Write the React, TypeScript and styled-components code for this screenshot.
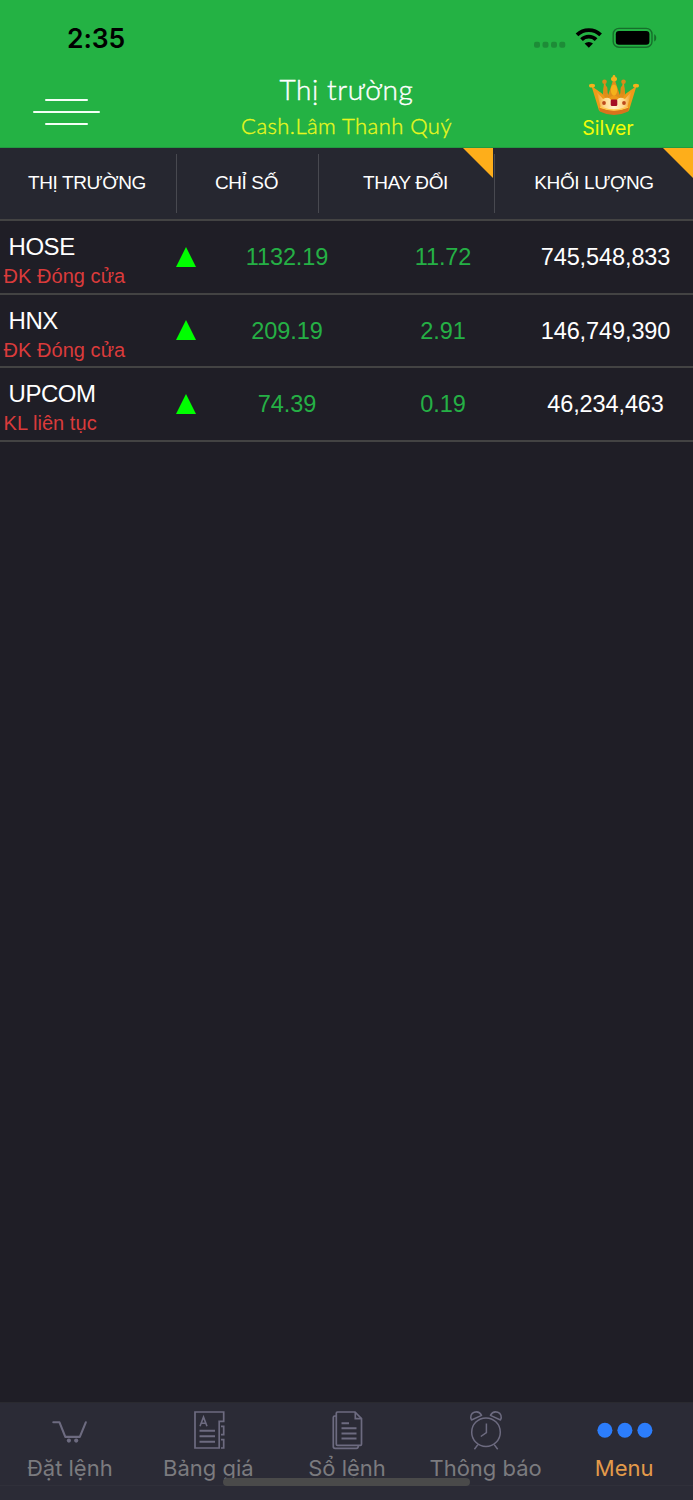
import React from "react";
import styled, { createGlobalStyle } from "styled-components";

const GlobalStyle = createGlobalStyle`
  * { box-sizing: border-box; }
  body { margin: 0; background: #1f1e26; }
`;

const Screen = styled.div`
  width: 693px;
  height: 1500px;
  display: flex;
  flex-direction: column;
  background: #1f1e26;
  color: #fff;
  font-family: "Liberation Sans", Arial, sans-serif;
  white-space: nowrap;
  overflow: hidden;
`;

const Header = styled.header`
  height: 148px;
  background: #24b244;
  border-bottom: 1px solid #229a40;
  flex: none;
`;

const StatusBar = styled.div`
  height: 72px;
  display: flex;
  justify-content: space-between;
  padding: 21px 36px 0 67px;
`;

const Clock = styled.div`
  font: 600 26.5px/34px Inter, sans-serif;
  letter-spacing: -0.1px;
  color: #000;
`;

const StatusIcons = styled.svg`
  display: block;
  width: 124px;
  height: 34px;
`;

const TitleBar = styled.div`
  height: 75px;
  display: grid;
  grid-template-columns: 173px 1fr 173px;
`;

const MenuButton = styled.div`
  display: flex;
  flex-direction: column;
  align-items: center;
  gap: 10px;
  width: 67px;
  margin: 26.5px 0 0 33.4px;
`;

const MenuLine = styled.span<{ $width: number }>`
  width: ${(p) => p.$width}px;
  height: 2px;
  border-radius: 1px;
  background: #f4fff6;
`;

const Titles = styled.div`
  display: flex;
  flex-direction: column;
  align-items: center;
  font-family: Lato, sans-serif;
`;

const Title = styled.h1`
  margin: 0;
  font-size: 28px;
  font-weight: 300;
  line-height: 35px;
  letter-spacing: 0.6px;
  -webkit-text-stroke: 0.4px #fff;
`;

const Account = styled.div`
  font-size: 22px;
  font-weight: 300;
  line-height: 37px;
  letter-spacing: 0.45px;
  color: #e8f81e;
  -webkit-text-stroke: 0.35px #e8f81e;
`;

const Rank = styled.div`
  display: flex;
  flex-direction: column;
  align-items: center;
`;

const Crown = styled.svg`
  width: 52px;
  height: 44px;
  margin-left: 14px;
`;

const RankName = styled.div`
  font: 400 19.5px/24px Inter, sans-serif;
  color: #f2fc08;
  margin-left: 3px;
`;

const columns = "177px 142px 176px 198px";

const TableHead = styled.div`
  display: grid;
  grid-template-columns: ${columns};
  height: 73px;
  flex: none;
  background: #262730;
  border-bottom: 2px solid #434343;
`;

const HeadCell = styled.div<{ $divider?: boolean }>`
  position: relative;
  display: flex;
  justify-content: center;
  padding-right: ${(p) => (p.$divider ? 3 : 0)}px;
  font-size: 19px;
  line-height: 70px;
  letter-spacing: -0.4px;

  &::after {
    content: "";
    display: ${(p) => (p.$divider ? "block" : "none")};
    position: absolute;
    right: 0;
    top: 6px;
    width: 1.5px;
    height: 59px;
    background: #484950;
  }
`;

const Corner = styled.span<{ $right: number }>`
  position: absolute;
  top: 0;
  right: ${(p) => p.$right}px;
  width: 30px;
  height: 30px;
  background: #feae1a;
  clip-path: polygon(0 0, 100% 0, 100% 100%);
`;

const Row = styled.div`
  display: grid;
  grid-template-columns: 174px 24px 178px 134px 1fr;
  height: 73.6px;
  flex: none;
  border-bottom: 2px solid #434343;
`;

const Market = styled.div`
  padding-top: 11.2px;
`;

const MarketName = styled.div`
  padding-left: 8.5px;
  font-size: 24px;
  line-height: 30px;
  letter-spacing: -0.45px;
`;

const MarketState = styled.div`
  padding-left: 3.5px;
  font-size: 20px;
  line-height: 28px;
  letter-spacing: 0.05px;
  color: #da3b3b;
`;

const UpArrow = styled.svg`
  width: 24px;
  height: 20px;
  margin-top: 25.5px;
`;

const Value = styled.div<{ $up?: boolean }>`
  font-size: 23.5px;
  line-height: 72px;
  letter-spacing: -0.1px;
  text-align: center;
  padding-left: ${(p) => (p.$up ? 0 : 8)}px;
  color: ${(p) => (p.$up ? "#25b045" : "#fff")};
`;

const Empty = styled.main`
  flex: 1;
`;

const TabBar = styled.nav`
  position: relative;
  display: grid;
  grid-template-columns: repeat(5, 1fr);
  height: 98px;
  flex: none;
  background: #2b2b36;
  border-top: 1px solid #2a2a30;
`;

const Tab = styled.div<{ $active?: boolean }>`
  display: flex;
  flex-direction: column;
  align-items: center;
  height: 83px;
  padding-top: 6px;
  border-bottom: 1px solid #30303a;
  font: 400 22px/30px Inter, sans-serif;
  color: ${(p) => (p.$active ? "#e39a4a" : "#7b7b7f")};
`;

const TabLabel = styled.span`
  padding-left: 1px;
`;

const TabIcon = styled.svg`
  width: 60px;
  height: 44px;
  fill: none;
  stroke: #6d6b80;
  stroke-width: 1.7;
`;

const HomeIndicator = styled.div`
  position: absolute;
  left: 223px;
  top: 75px;
  width: 247px;
  height: 8px;
  border-radius: 4px;
  background: #4a4a4a;
`;

const markets = [
  { name: "HOSE", state: "ĐK Đóng cửa", index: "1132.19", change: "11.72", volume: "745,548,833" },
  { name: "HNX", state: "ĐK Đóng cửa", index: "209.19", change: "2.91", volume: "146,749,390" },
  { name: "UPCOM", state: "KL liên tục", index: "74.39", change: "0.19", volume: "46,234,463" },
];

const CartIcon = () => (
  <TabIcon viewBox="0 0 60 44">
    <path
      d="M14.3 13.3h6.2l5.8 14.6h14.500l6-14.600"
      strokeWidth="2.1"
      strokeLinecap="round"
      strokeLinejoin="round"
    />
    <g fill="#6d6b80" stroke="none">
      <circle cx="29.900" cy="31.600" r="2.100" />
      <circle cx="37.200" cy="31.600" r="2.100" />
    </g>
  </TabIcon>
);

const BoardIcon = () => (
  <TabIcon viewBox="0 0 60 44">
    <path d="M17 3h28.700v9.300h-4.500v26.700H17z" />
    <path d="M43 17.300h2.700v8.400H43M43 30.700h2.700v8.300H43" />
    <path d="M22 17.300l3.500-9.200 3.500 9.200M23.200 14.300h4.600" strokeWidth="1.6" />
    <path d="M21.500 21.800h15.500M21.500 27.300h15.500M21.500 32.800h15.500" strokeWidth="1.9" />
  </TabIcon>
);

const OrdersIcon = () => (
  <TabIcon viewBox="0 0 60 44">
    <path d="M21.500 3h17.500l6.500 6.700v25.500q0 1.200-1.200 1.200H21.500q-1.200 0-1.200-1.200V4.200q0-1.200 1.200-1.200z" />
    <path d="M39.300 3v6.600h6.200M20.300 7h-1.500q-1.500 0-1.500 1.500v29q0 1.800 1.800 1.800h21.400q1.800 0 1.800-2.500" />
    <path d="M25.500 14.300h7.500M25.500 19.300h15M25.500 24.500h15M25.500 29.500h15" strokeWidth="1.9" />
  </TabIcon>
);

const AlarmIcon = () => (
  <TabIcon viewBox="0 0 60 44">
    <g strokeWidth="1.5">
      <circle cx="31" cy="23.200" r="14.300" />
      <path d="M31.400 14.500v9l-5.600 4M22.900 35.600l-3.500 4.700M39.200 35.600l3.500 4.700" />
      <path
        d="M16.500 11C14.800 7.600 16.200 4.400 19.200 3.300c3-1 5.800.1 7.400 3.100zM45.500 11c1.700-3.400.3-6.600-2.700-7.700-3-1-5.800.1-7.400 3.100z"
        strokeLinejoin="round"
      />
    </g>
  </TabIcon>
);

const DotsIcon = () => (
  <TabIcon viewBox="0 0 60 44">
    <g fill="#2c7dfb" stroke="none">
      <circle cx="10.900" cy="21.300" r="7.500" />
      <circle cx="30.900" cy="21.300" r="7.500" />
      <circle cx="50.900" cy="21.300" r="7.500" />
    </g>
  </TabIcon>
);

export default function App() {
  return (
    <Screen>
      <GlobalStyle />
      <Header>
        <StatusBar>
          <Clock>2:35</Clock>
          <StatusIcons viewBox="533 21 124 34">
            <g fill="#1d8c37">
              <rect x="534" y="41.700" width="6" height="6" rx="2" />
              <rect x="542.500" y="41.700" width="6" height="6" rx="2" />
              <rect x="551" y="41.700" width="6" height="6" rx="2" />
              <rect x="559.300" y="41.700" width="6" height="6" rx="2" />
            </g>
            <g fill="none" stroke="#000" strokeWidth="3.8">
              <path d="M577 34.800a17 17 0 0 1 23.600 0" />
              <path d="M581.500 39.700a10.300 10.300 0 0 1 14.600 0" />
            </g>
            <path d="M584.600 43.600a6 6 0 0 1 8.400 0l-4.200 4.200z" />
            <rect x="613.200" y="28.400" width="38.800" height="18.800" rx="5.800" fill="none" stroke="#166f2b" strokeWidth="1.4" />
            <rect x="615.800" y="31" width="33.600" height="13.800" rx="3.200" />
            <path d="M654.200 34.200c2.700 1.200 2.700 6.200 0 7.400z" fill="#166f2b" />
          </StatusIcons>
        </StatusBar>
        <TitleBar>
          <MenuButton>
            <MenuLine $width={43} />
            <MenuLine $width={67} />
            <MenuLine $width={43} />
          </MenuButton>
          <Titles>
            <Title>Thị trường</Title>
            <Account>Cash.Lâm Thanh Quý</Account>
          </Titles>
          <Rank>
            <Crown viewBox="588 71 52 44">
              <defs>
                <linearGradient id="gold" x1="0" x2="1">
                  <stop offset="0" stopColor="#f0981f" />
                  <stop offset=".22" stopColor="#ffd78a" />
                  <stop offset=".5" stopColor="#fff3c8" />
                  <stop offset=".78" stopColor="#ffd78a" />
                  <stop offset="1" stopColor="#f0981f" />
                </linearGradient>
              </defs>
              <path d="M602.500 97l1.500-15h1.200l3 12 4.600-14h2.400l4.600 14 3-12h1.200l1.500 15z" fill="#e08e1a" />
              <path d="M591.500 85l10.500 7.500 4.500 5.500 7.500-4 7.500 4 4.500-5.500 10.500-7.500-7.500 24.500q-15 7-30 0z" fill="#ee9a18" />
              <path d="M596.500 90.500l6.500 7.500q5.500-3 8 1l3 1 3-1q2.500-4 8-1l6.500-7.500-4.500 16.500q-13 5-26 0z" fill="url(#gold)" />
              <path d="M599 106.500q15 6 30 0l-.7 4q-14.300 7-28.600 0z" fill="#d9731c" />
              <path d="M600 106.200q14 5.500 28 0" fill="none" stroke="#ffc847" strokeWidth="1.4" />
              <g fill="#f5b21b">
                <ellipse cx="592" cy="84.700" rx="3" ry="1.900" />
                <ellipse cx="636" cy="84.700" rx="3" ry="1.900" />
                <ellipse cx="614" cy="78" rx="3" ry="2.300" />
                <circle cx="614" cy="75.300" r="1.300" />
                <ellipse cx="614" cy="89" rx="3.200" ry="5.500" />
              </g>
              <g fill="#dd8a18">
                <circle cx="604.500" cy="80.700" r="2.300" />
                <circle cx="623.500" cy="80.700" r="2.300" />
                <ellipse cx="605.500" cy="89" rx="2" ry="4" />
                <ellipse cx="622.500" cy="89" rx="2" ry="4" />
              </g>
              <rect x="610.700" y="98.500" width="6.600" height="6.600" rx="1.300" fill="#a40d25" />
              <circle cx="604" cy="102" r="1.900" fill="#bd4a1b" />
              <circle cx="624" cy="102" r="1.900" fill="#bd4a1b" />
            </Crown>
            <RankName>Silver</RankName>
          </Rank>
        </TitleBar>
      </Header>
      <TableHead>
        <HeadCell $divider>THỊ TRƯỜNG</HeadCell>
        <HeadCell $divider>CHỈ SỐ</HeadCell>
        <HeadCell $divider>
          THAY ĐỔI
          <Corner $right={2} />
        </HeadCell>
        <HeadCell>
          KHỐI LƯỢNG
          <Corner $right={0} />
        </HeadCell>
      </TableHead>
      {markets.map((m) => (
        <Row key={m.name}>
          <Market>
            <MarketName>{m.name}</MarketName>
            <MarketState>{m.state}</MarketState>
          </Market>
          <UpArrow viewBox="0 0 24 20">
            <path d="M12 0l10 20H2z" fill="#00ff00" />
          </UpArrow>
          <Value $up>{m.index}</Value>
          <Value $up>{m.change}</Value>
          <Value>{m.volume}</Value>
        </Row>
      ))}
      <Empty />
      <TabBar>
        <Tab>
          <CartIcon />
          <TabLabel>Đặt lệnh</TabLabel>
        </Tab>
        <Tab>
          <BoardIcon />
          <TabLabel>Bảng giá</TabLabel>
        </Tab>
        <Tab>
          <OrdersIcon />
          <TabLabel>Sổ lệnh</TabLabel>
        </Tab>
        <Tab>
          <AlarmIcon />
          <TabLabel>Thông báo</TabLabel>
        </Tab>
        <Tab $active>
          <DotsIcon />
          <TabLabel>Menu</TabLabel>
        </Tab>
        <HomeIndicator />
      </TabBar>
    </Screen>
  );
}
